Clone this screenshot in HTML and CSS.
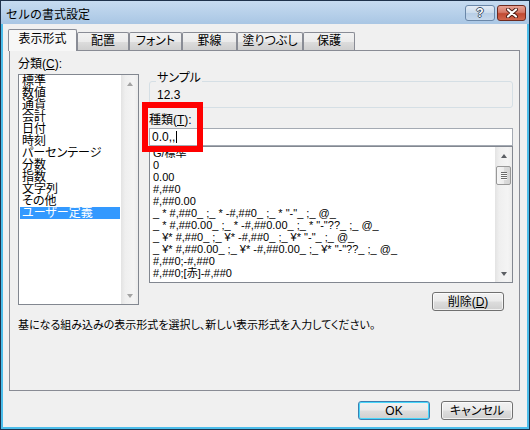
FILE: index.html
```html
<!DOCTYPE html>
<html lang="ja">
<head>
<meta charset="utf-8">
<title>セルの書式設定</title>
<link rel="stylesheet" href="styles.css">
</head>
<body>
<div class="window">
  <div class="titlebar">
    <span class="title">セルの書式設定</span>
    <div class="caption-buttons">
      <span class="cap-btn help">?</span>
      <span class="cap-btn close">
        <svg width="14" height="10" viewBox="0 0 14 10">
          <path d="M3 1.5 L11 8.5 M11 1.5 L3 8.5" stroke="#4a1a12" stroke-width="4" stroke-linecap="round"/>
          <path d="M3 1.5 L11 8.5 M11 1.5 L3 8.5" stroke="#ffffff" stroke-width="2.2" stroke-linecap="round"/>
        </svg>
      </span>
    </div>
  </div>
  <div class="client">
    <div class="tabs">
      <span class="tab active">表示形式</span>
      <span class="tab t-haichi">配置</span>
      <span class="tab t-font">フォント</span>
      <span class="tab t-keisen">罫線</span>
      <span class="tab t-nuri">塗りつぶし</span>
      <span class="tab t-hogo">保護</span>
    </div>
    <div class="panel">
      <div class="panel-main">
        <div class="cat-col">
          <div class="label">分類(<u>C</u>):</div>
          <div class="listbox cat-list">
            <ul class="items">
              <li>標準</li>
              <li>数値</li>
              <li>通貨</li>
              <li>会計</li>
              <li>日付</li>
              <li>時刻</li>
              <li>パーセンテージ</li>
              <li>分数</li>
              <li>指数</li>
              <li>文字列</li>
              <li>その他</li>
              <li class="selected">ユーザー定義</li>
            </ul>
            <div class="vscroll disabled">
              <span class="sb-btn"><span class="arrow up"></span></span>
              <span class="sb-btn"><span class="arrow down"></span></span>
            </div>
          </div>
        </div>
        <div class="fmt-col">
          <div class="group">
            <span class="group-legend">サンプル</span>
            <div class="sample-value">12.3</div>
          </div>
          <div class="label type-label">種類(<u>T</u>):</div>
          <div class="textbox">0.0,,<span class="caret"></span></div>
          <div class="listbox fmt-list">
            <div class="clip">
              <ul class="items">
                <li>G/標準</li>
                <li>0</li>
                <li>0.00</li>
                <li>#,##0</li>
                <li>#,##0.00</li>
                <li>_ * #,##0_ ;_ * -#,##0_ ;_ * "-"_ ;_ @_</li>
                <li>_ * #,##0.00_ ;_ * -#,##0.00_ ;_ * "-"??_ ;_ @_</li>
                <li>_ ¥* #,##0_ ;_ ¥* -#,##0_ ;_ ¥* "-"_ ;_ @_</li>
                <li>_ ¥* #,##0.00_ ;_ ¥* -#,##0.00_ ;_ ¥* "-"??_ ;_ @_</li>
                <li>#,##0;-#,##0</li>
                <li>#,##0;[赤]-#,##0</li>
              </ul>
            </div>
            <div class="vscroll">
              <span class="sb-btn"><span class="arrow up"></span></span>
              <span class="thumb"><i></i><i></i><i></i><i></i></span>
              <span class="sb-fill"></span>
              <span class="sb-btn"><span class="arrow down"></span></span>
            </div>
          </div>
          <div class="delete-row"><button class="btn">削除(<u>D</u>)</button></div>
        </div>
      </div>
      <p class="desc">基になる組み込みの表示形式を選択し、新しい表示形式を入力してください。</p>
    </div>
    <div class="footer">
      <button class="btn default">OK</button>
      <button class="btn">キャンセル</button>
    </div>
  </div>
  <div class="annotation"></div>
</div>
</body>
</html>
```

FILE: styles.css
```css
* { box-sizing: border-box; }
html, body { margin: 0; padding: 0; }
body {
  width: 530px;
  height: 430px;
  overflow: hidden;
  background: #ffffff;
  font-family: "Liberation Sans", "Noto Sans CJK JP", sans-serif;
  font-size: 12px;
  color: #000;
}

.window {
  position: relative;
  width: 530px;
  height: 430px;
  border: 1px solid #1e324c;
  background: #f0f0f0;
  display: flex;
  flex-direction: column;
}

/* title bar */
.titlebar {
  height: 23px;
  flex: none;
  display: flex;
  justify-content: space-between;
  align-items: flex-start;
  padding: 0 3px 0 5px;
  background: linear-gradient(to bottom, #c6dbf0 0%, #b5cfe9 60%, #a9c6e4 100%);
}
.title {
  font-family: "Noto Sans CJK JP", sans-serif;
  font-size: 12px;
  line-height: 14px;
  margin-top: 6px;
  color: #000;
}
.caption-buttons {
  display: flex;
  gap: 2px;
  margin-top: 4px;
}
.cap-btn {
  height: 16px;
  border-radius: 3px;
  display: flex;
  align-items: center;
  justify-content: center;
}
.help {
  width: 30px;
  border: 1px solid #6a87a8;
  background: linear-gradient(to bottom, #e3ecf6 0%, #cbdbec 50%, #b7cde5 50%, #c5d8ec 100%);
  color: #fff;
  font-weight: bold;
  font-size: 12px;
  line-height: 14px;
  text-shadow: 1px 0 0 #3d4f66, -1px 0 0 #3d4f66, 0 1px 0 #3d4f66, 0 -1px 0 #3d4f66;
}
.close {
  width: 29px;
  border: 1px solid #6e2a1f;
  background: linear-gradient(to bottom, #e8a395 0%, #d67a68 45%, #c14a32 55%, #d2664d 100%);
}

/* client */
.client {
  flex: 1;
  display: flex;
  flex-direction: column;
  border: 2px solid #4cbdea;
  border-top: none;
  font-feature-settings: "palt";
}

.tabs {
  display: flex;
  align-items: flex-end;
  height: 22px;
  margin: 5px 0 -1px 5px;
  position: relative;
  z-index: 1;
}
.tab {
  height: 18px;
  margin-bottom: 1px;
  border: 1px solid #898c95;
  border-bottom: none;
  border-radius: 2px 2px 0 0;
  background: linear-gradient(to bottom, #f2f2f2 0%, #ebebeb 50%, #dddddd 50%, #cfcfcf 100%);
  text-align: center;
  line-height: 17px;
  font-size: 12px;
}
.tab.active {
  width: 69px;
  height: 22px;
  margin-bottom: 0;
  background: #f7f7f7;
  line-height: 19px;
}
.t-haichi { width: 52px; }
.t-font { width: 53px; }
.t-keisen { width: 55px; }
.t-nuri { width: 66px; }
.t-hogo { width: 52px; }

.panel {
  width: 511px;
  height: 341px;
  margin-left: 6px;
  border: 1px solid #898c95;
  background: #f0f0f0;
  padding: 6px 6px 0 8px;
  flex: none;
}
.panel-main {
  display: flex;
  align-items: flex-start;
}
.label {
  line-height: 14px;
  height: 14px;
}
.cat-col {
  width: 121px;
  flex: none;
}
.cat-col .label { margin-bottom: 3px; }

.listbox {
  border: 1px solid #828790;
  background: #fff;
  display: flex;
}
.items {
  list-style: none;
  margin: 0;
  padding: 0;
}
.cat-list {
  height: 231px;
}
.cat-list .items {
  flex: 1;
  min-width: 0;
}
.cat-list li {
  height: 12px;
  line-height: 12px;
  padding-left: 2px;
  margin: 0 1px;
  white-space: nowrap;
}
.cat-list li.selected {
  background: #3399ff;
  color: #fff;
}

.vscroll {
  width: 17px;
  flex: none;
  display: flex;
  flex-direction: column;
  justify-content: space-between;
  background: linear-gradient(to right, #e3e3e3 0%, #efefef 25%, #f4f4f4 75%, #ececec 100%);
}
.sb-btn {
  height: 17px;
  display: flex;
  align-items: center;
  justify-content: center;
}
.arrow {
  width: 0;
  height: 0;
  border-left: 3.5px solid transparent;
  border-right: 3.5px solid transparent;
}
.arrow.up { border-bottom: 4px solid #5b5e63; }
.arrow.down { border-top: 4px solid #5b5e63; }
.disabled .arrow.up { border-bottom-color: #a3a3a3; }
.disabled .arrow.down { border-top-color: #a3a3a3; }

.fmt-col {
  width: 364px;
  flex: none;
  margin-left: 10px;
}
.group {
  margin-top: 24px;
  border: 1px solid #d5dfe5;
  border-radius: 3px;
  padding: 0 6px 6px 7px;
}
.group-legend {
  display: block;
  width: fit-content;
  margin-top: -10px;
  margin-left: -1px;
  padding: 0 1px;
  line-height: 13px;
  height: 13px;
  background: #f0f0f0;
}
.sample-value {
  margin-top: 4px;
  line-height: 12px;
  height: 12px;
  font-size: 12px;
}
.type-label {
  margin-top: 5px;
  margin-bottom: 1px;
}
.textbox {
  height: 18px;
  border: 1px solid #a4aab3;
  background: #fff;
  padding-left: 2px;
  line-height: 16px;
  font-size: 12px;
  display: flex;
  align-items: center;
}
.caret {
  display: inline-block;
  width: 1px;
  height: 12px;
  background: #000;
  margin-left: 1px;
}
.fmt-list {
  height: 137px;
}
.fmt-list .clip {
  flex: 1;
  min-width: 0;
  overflow: hidden;
  margin-top: 3px;
  padding-left: 3px;
}
.fmt-list .items {
  margin-top: -3px;
}
.fmt-list li {
  height: 12px;
  line-height: 12px;
  font-size: 11px;
  white-space: pre;
}
.fmt-list .vscroll {
  justify-content: flex-start;
}
.thumb {
  height: 19px;
  margin: 2px 1px 0;
  border: 1px solid #989898;
  border-radius: 2px;
  background: linear-gradient(to right, #f6f6f6 0%, #ececec 50%, #dcdcdc 50%, #d4d4d4 100%);
  display: flex;
  flex-direction: column;
  align-items: center;
  justify-content: center;
  gap: 1px;
}
.thumb i {
  display: block;
  width: 6px;
  height: 1px;
  background: #6a6a6a;
  box-shadow: 0 1px 0 #f8f8f8;
}
.sb-fill { flex: 1; }

.delete-row {
  display: flex;
  justify-content: flex-end;
  margin-top: 9px;
  padding-right: 9px;
}
.btn {
  width: 72px;
  height: 19px;
  padding: 0;
  border: 1px solid #707070;
  border-radius: 3px;
  background: linear-gradient(to bottom, #f2f2f2 0%, #ebebeb 48%, #dddddd 52%, #cfcfcf 100%);
  box-shadow: inset 0 0 0 1px rgba(255,255,255,0.7);
  font-family: "Liberation Sans", "Noto Sans CJK JP", sans-serif;
  font-feature-settings: "palt";
  font-size: 12px;
  line-height: 16px;
  color: #000;
  text-align: center;
}
.btn.default {
  border-color: #3c7fb1;
  box-shadow: inset 0 0 0 1px #48d7fb;
}

.desc {
  margin: 7px 0 0 0;
  line-height: 14px;
  font-size: 11px;
  white-space: nowrap;
}

.footer {
  display: flex;
  justify-content: flex-end;
  gap: 11px;
  margin-top: 10px;
  padding-right: 14px;
}

.annotation {
  position: absolute;
  left: 141px;
  top: 101px;
  width: 61px;
  height: 50px;
  border: 6px solid #ff0000;
  pointer-events: none;
  z-index: 5;
}
```
